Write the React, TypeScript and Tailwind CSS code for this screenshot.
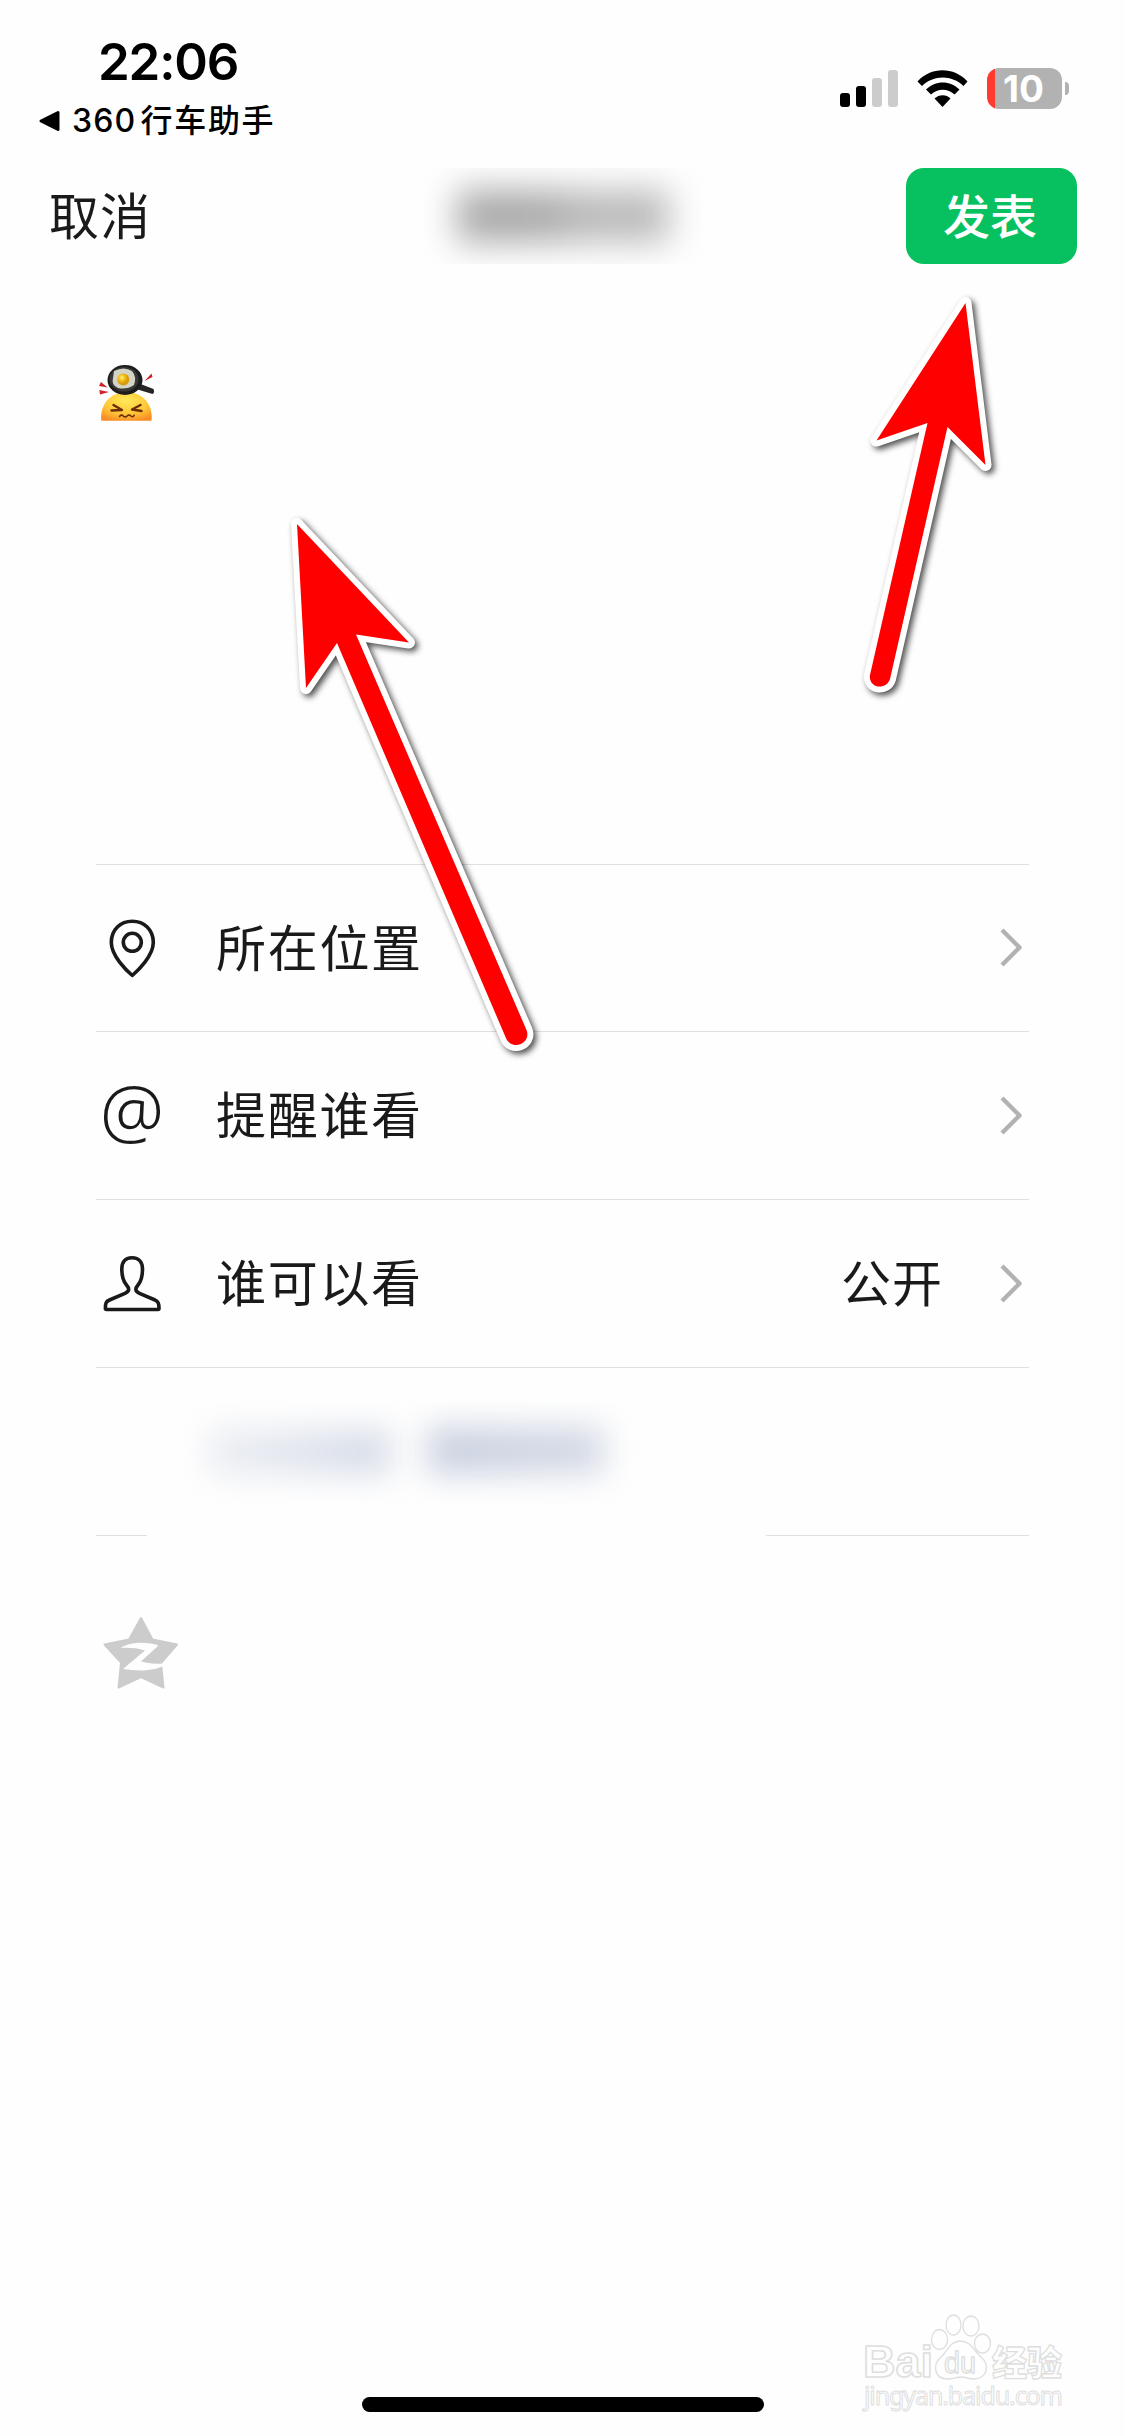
import type { ReactNode } from "react";

const arrows = [
    "M297 524 L409 642.5 L356 634.5 L526.5 1030 C532 1044 511 1052 505.5 1037 L337 643 L306 688 Z",
    "M965.5 303 L985.5 465 L947.5 427 L890 679 C886 691 868 688 870 675 L927.5 423 L876.5 440.5 Z",
];

const PinIcon = () => (
    <svg className="w-[60px] h-[60px]" viewBox="0 0 60 60" fill="none" stroke="#1a1a1a" strokeWidth={3.6} strokeLinejoin="round">
        <path d="M30.3 57.5 C25 53 9.3 38 9.3 24.5 C9.3 11.5 18.5 3.3 30.3 3.3 C42 3.3 51.3 11.5 51.3 24.5 C51.3 38 35.5 53 30.3 57.5 Z" />
        <circle cx="30.3" cy="24.3" r="9" />
    </svg>
);

const AtIcon = () => (
    <span className="w-[60px] h-[60px] pb-[13px] flex items-center justify-center text-[72px] leading-[60px] font-light text-[#1a1a1a] font-['Noto_Sans',sans-serif]">@</span>
);

const PersonIcon = () => (
    <svg className="w-[60px] h-[60px]" viewBox="0 0 60 60" fill="none" stroke="#1a1a1a" strokeWidth={3.6} strokeLinejoin="round">
        <path d="M30 3.8 C22.5 3.8 19.8 9 19.8 15 C19.8 23 21 27 24.5 31 C28 35 27 37.5 23 39.3 L7.5 46 C4 47.5 3.4 49 3.4 54.5 Q3.4 55.5 4.5 55.5 L56 55.5 Q57 55.5 57 54.5 C57 49 56 47.5 53 46 L37.500 39.3 C33.5 37.5 32.5 35 36 31 C39.5 27 40.5 23 40.5 15 C40.5 9 37.5 3.8 30 3.8 Z" />
    </svg>
);

const Chevron = () => (
    <svg className="w-[24px] h-[42px]" viewBox="0 0 24 42" fill="none" stroke="#b2b2b2" strokeWidth={4.4} strokeLinejoin="round">
        <path d="M3 3 L20.5 20.5 L3 38" />
    </svg>
);

const Emoji = () => (
    <svg className="w-[60px] h-[60px]" viewBox="0 0 60 60">
        <defs>
            <radialGradient id="face" cx="50%" cy="30%" r="75%">
                <stop offset="0" stopColor="#ffe95a" />
                <stop offset="0.6" stopColor="#ffc738" />
                <stop offset="1" stopColor="#f98b25" />
            </radialGradient>
            <radialGradient id="yolk" cx="38%" cy="35%">
                <stop offset="0" stopColor="#fff3a0" />
                <stop offset="0.4" stopColor="#f9c91f" />
                <stop offset="1" stopColor="#d99a0a" />
            </radialGradient>
        </defs>
        <path d="M5.3 57.8 C3.5 41 15 29 30.5 29 C46 29 57.500 41 55.5 57.8 Z" fill="url(#face)" />
        <g fill="none" stroke="#6b2c0a" strokeWidth={2.4} strokeLinecap="round" strokeLinejoin="round">
            <path d="M17.5 42 L26 47 L15.500 47.5" />
            <path d="M44.5 42 L36 46.5 L45.5 48" />
            <path d="M23.5 53.5 q2 -2.5 3.8 -0.5 q2 2 3.8 0 q2 -2 3.5 -0.2 q2 2 3.5 -0.5" strokeWidth={1.6} />
        </g>
        <path d="M42 20 L57.5 26 Q59 30 56.5 31 L40 26 Z" fill="#262626" />
        <ellipse cx="29" cy="17" rx="17.500" ry="15" fill="#1c1c1c" />
        <ellipse cx="28" cy="16.3" rx="14.5" ry="12.3" fill="#383936" />
        <path d="M18 8 Q28 3 36 8 Q41 14 38 22 Q31 27 22 25 Q15 22 17 15 Z" fill="#d3d3c6" />
        <circle cx="27.3" cy="16.5" r="6" fill="url(#yolk)" />
        <g fill="#cf222b">
            <path d="M48.5 18 L55.5 10.5 L56.5 14 Z" />
            <path d="M11.5 24.5 L5 19 L3 23 Z" />
            <path d="M13 29 L3.3 27 L4 31.5 Z" />
        </g>
    </svg>
);

const rows: { label: string; value?: string; icon: ReactNode; height: string }[] = [
    { label: "所在位置", icon: <PinIcon />, height: "h-[167px]" },
    { label: "提醒谁看", icon: <AtIcon />, height: "h-[168px]" },
    { label: "谁可以看", value: "公开", icon: <PersonIcon />, height: "h-[168px]" },
];

function StatusBar() {
    return (
        <div className="h-[168px] flex justify-between text-black">
            <div className="pt-[31px] pl-[38px]">
                <div className="pl-[60px] text-[51px] leading-[62px] font-semibold tracking-[-1.2px]">22:06</div>
                <div className="flex items-center mt-[8px]">
                    <svg className="w-[22px] h-[22px]" viewBox="0 0 22 22">
                        <path d="M3 11 L20 2.5 V19.5 Z" stroke="#000" strokeWidth={3} strokeLinejoin="round" />
                    </svg>
                    <span className="ml-[12px] text-[32px] leading-[40px] font-medium tracking-[1.2px]">360</span>
                    <span className="ml-[4px] text-[32px] leading-[40px] font-medium tracking-[1.7px]">行车助手</span>
                </div>
            </div>
            <div className="flex items-start pt-[67px] pr-[56px]">
                <div className="flex items-end gap-[6px] h-[40px]">
                    <div className="w-[10px] h-[14px] rounded-[3px] bg-black" />
                    <div className="w-[10px] h-[21px] rounded-[3px] bg-black" />
                    <div className="w-[10px] h-[29px] rounded-[3px] bg-[#ccc]" />
                    <div className="w-[10px] h-[37px] rounded-[3px] bg-[#ccc]" />
                </div>
                <svg className="w-[52px] h-[40px] ml-[19px]" viewBox="0 0 52 40">
                    <path d="M0.5 14.5 C14 -0.5 37 -0.5 50.5 14.5 L46.5 19 C35 7.5 16.5 7.5 5 19 Z" />
                    <path d="M9 22.5 C18.5 13 33 13 42.500 22.5 L37.5 27.5 C31 21 20.5 21 14 27.5 Z" />
                    <path d="M17.5 31.5 C22 27 29.5 27 33.5 31.5 L25.5 40 Z" />
                </svg>
                <div className="ml-[18px] mt-px w-[75px] h-[41px] rounded-[12px] bg-linear-to-r from-[#ff3b30] from-[8px] to-[#b2b2b2] to-[8px] flex items-center justify-center">
                    <span className="pr-[2px] text-[37px] leading-[41px] font-bold text-white">10</span>
                </div>
                <div className="ml-[3px] mt-[15px] w-[4px] h-[13px] rounded-r-full bg-[#b2b2b2]" />
            </div>
        </div>
    );
}

function Header() {
    return (
        <div className="h-[96px] pl-[49px] pr-[48px] flex items-center justify-between">
            <span className="pt-[3px] text-[50px] tracking-[1px] leading-[93px]">取消</span>
            <div className="relative w-[290px] h-[96px] ml-[74px] overflow-hidden">
                <div className="absolute left-[36px] top-[22px] w-[212px] h-[52px] bg-linear-to-r from-[#a9a9a9] via-[#a9a9a9] via-40% to-[#bababa] to-60% blur-[17px]" />
            </div>
            <button className="w-[171px] h-[96px] pt-[2px] pr-[3px] rounded-[18px] bg-[#07c160] text-white text-[47px] font-medium">发表</button>
        </div>
    );
}

function QzoneStar() {
    return (
        <svg className="w-[80px] h-[76px]" viewBox="0 0 80 76">
            <path
                d="M40 4 L51.5 25.5 L76 30.5 L60 49 L62.500 73.5 L40 63 L17.5 73.5 L20 48.5 L3.5 30.5 L28 25.5 Z"
                fill="#ccc"
                stroke="#ccc"
                strokeWidth={2}
                strokeLinejoin="round"
            />
            <path d="M19.5 34 C28 28 46 27 57.5 31.5 L40 47.5 C49 50 57 50 66.5 49.5 C55 57.5 38 57.500 22 55 L44 36.500 C36 34 28 33.5 19.5 34 Z" fill="#fefefe" />
        </svg>
    );
}

function Watermark() {
    return (
        <svg className="w-[210px] h-[105px]" viewBox="0 0 210 105" fill="#fefefe" stroke="#dedede" strokeWidth={1.3}>
            <text x="3" y="65" fontSize="44" textLength="70" lengthAdjust="spacingAndGlyphs" strokeWidth={1.6} className="font-['Liberation_Sans',sans-serif] font-bold">Bai</text>
            <ellipse cx="79.500" cy="27.5" rx="8" ry="10" />
            <ellipse cx="93.500" cy="13" rx="7.5" ry="10" />
            <ellipse cx="111" cy="14" rx="8" ry="10" />
            <ellipse cx="122.500" cy="31.5" rx="8" ry="9.5" />
            <path d="M100.500 29 C90 29 88 39 81 45 C72 53 74 67 88 67 C95 67 96 65 101 65 C106 65 109 67 114 67 C128 66 130 53 121 45 C114 39 111 29 100.500 29 Z" />
            <text x="84" y="61" fontSize="29" textLength="32" lengthAdjust="spacingAndGlyphs" className="font-['Liberation_Sans',sans-serif]">du</text>
            <text x="132" y="64" fontSize="35" className="font-['Noto_Sans_CJK_SC',sans-serif] font-black">经验</text>
            <text x="4" y="93" fontSize="25" textLength="199" strokeWidth={1} className="font-['Noto_Sans',sans-serif]">jingyan.baidu.com</text>
        </svg>
    );
}

export default function App() {
    return (
        <div className="relative w-[1125px] h-[2436px] overflow-hidden flex flex-col bg-[#fefefe] text-[#1a1a1a] font-['Inter','Noto_Sans_CJK_SC',sans-serif]">
            <StatusBar />
            <Header />

            <div className="h-[600px] px-24 pt-[99px]">
                <Emoji />
            </div>

            <div className="mx-24">
                {rows.map((row) => (
                    <div key={row.label} className={`${row.height} border-t border-[#e0e0e0] flex items-center pl-[6px] pr-[6px]`}>
                        {row.icon}
                        <span className="ml-[54px] pt-px flex-1 text-[50px] leading-[72px] tracking-[1.7px]">{row.label}</span>
                        {row.value && <span className="mr-[56px] pt-px text-[50px] leading-[72px] tracking-[1px]">{row.value}</span>}
                        <Chevron />
                    </div>
                ))}

                {/* hidden account hint */}
                <div className="h-[168px] border-t border-[#e0e0e0]">
                    <div className="relative mt-[34px] h-[133px] overflow-hidden">
                        <div className="absolute left-[112px] top-[28px] w-[182px] h-[44px] bg-linear-to-r from-[#eceef3] to-[#d3d9e6] blur-[16px]" />
                        <div className="absolute left-[332px] top-[25px] w-[176px] h-[47px] bg-linear-to-r from-[#c8cfdf] to-[#d4d9e5] blur-[16px]" />
                    </div>
                </div>
                <div className="flex justify-between">
                    <div className="w-[51px] h-px bg-[#e0e0e0]" />
                    <div className="w-[263px] h-px bg-[#e0e0e0]" />
                </div>
            </div>

            <div className="pl-[101px] pt-[78px]">
                <QzoneStar />
            </div>

            <div className="mt-auto flex justify-end pr-[55px]">
                <Watermark />
            </div>
            <div className="w-[402px] h-[15px] mb-[24px] -mt-[20px] ml-[362px] rounded-full bg-black" />

            {/* guide arrows over the page */}
            <svg className="absolute inset-0 w-full h-full pointer-events-none" viewBox="0 0 1125 2436">
                {arrows.map((d) => (
                    <g key={d} className="[filter:drop-shadow(3px_3px_3px_rgba(0,0,0,0.7))]">
                        <path d={d} fill="#fff" stroke="#fff" strokeWidth={12} strokeLinejoin="round" />
                        <path d={d} fill="#f00" />
                    </g>
                ))}
            </svg>
        </div>
    );
}
